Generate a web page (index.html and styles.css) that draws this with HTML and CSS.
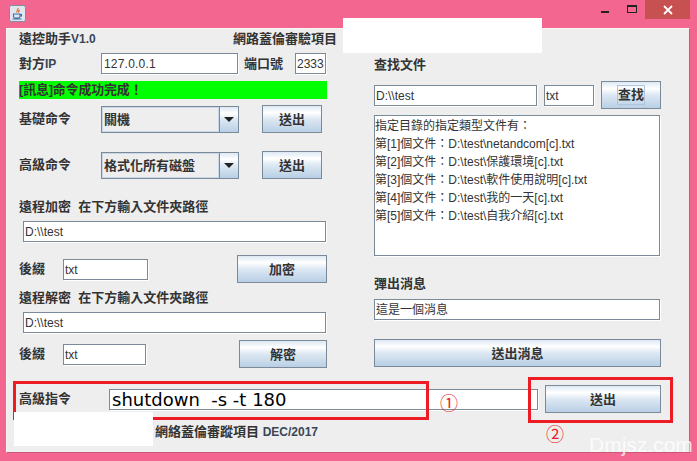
FILE: index.html
```html
<!DOCTYPE html>
<html lang="zh-Hant">
    <head>
        <meta charset="UTF-8" />
        <title>遠控助手</title>
        <link rel="stylesheet" href="styles.css">
    </head>
    <body>
        <div class="window">
            <div class="titlebar">
                <svg class="app-icon" width="17" height="17" viewBox="0 0 17 17">
                    <rect x="0.5" y="0.5" width="16" height="16" rx="2" fill="#dfe6ee" stroke="#7d8ea3" />
                    <path d="M9 3c1 1.500-2 2.500-1 4.500M10.500 5c-1 1-1.500 1.500-.5 2.500" fill="none" stroke="#e0682a" stroke-width="1.200" />
                    <path d="M4.500 9h6.500v2.500c0 1-1 1.500-2 1.500H6.500c-1 0-2-.5-2-1.500zM11 9.500h1.500v1.500H11M3.500 14h9" fill="none" stroke="#3f6ea8" stroke-width="1.100" />
                </svg>
                <div class="controls">
                    <span class="ctl-min"></span>
                    <span class="ctl-max"></span>
                    <span class="ctl-close">
                        <svg width="10" height="10" viewBox="0 0 10 10"><path d="M1 1l8 8M9 1l-8 8" stroke="#fff" stroke-width="1.800" /></svg>
                    </span>
                </div>
            </div>
            <div class="panel">
                <div class="columns">
                    <div class="col-left">
                        <div class="row title-row">
                            <span class="label">遠控助手<span class="latin">V1.0</span></span>
                            <span class="label project">網路蓋倫審驗項目</span>
                        </div>
                        <div class="row ip-row">
                            <span class="label w82">對方<span class="latin">IP</span></span>
                            <div class="field ip">127.0.0.1</div>
                            <span class="label port-label">端口號</span>
                            <div class="field port">2333</div>
                        </div>
                        <div class="status">[訊息]命令成功完成！</div>
                        <div class="row cmd-row">
                            <span class="label w82">基礎命令</span>
                            <div class="combo">
                                <div class="combo-value">關機</div>
                                <div class="combo-arrow"></div>
                            </div>
                            <button class="btn btn-send">送出</button>
                        </div>
                        <div class="row cmd-row second">
                            <span class="label w82">高級命令</span>
                            <div class="combo">
                                <div class="combo-value">格式化所有磁盤</div>
                                <div class="combo-arrow"></div>
                            </div>
                            <button class="btn btn-send">送出</button>
                        </div>
                        <div class="label section enc-title">遠程加密&nbsp;&nbsp;在下方輸入文件夾路徑</div>
                        <div class="field path enc-path">D:\\test</div>
                        <div class="row suffix-row enc-suffix">
                            <span class="label w44">後綴</span>
                            <div class="field suffix">txt</div>
                            <button class="btn btn-enc">加密</button>
                        </div>
                        <div class="label section dec-title">遠程解密&nbsp;&nbsp;在下方輸入文件夾路徑</div>
                        <div class="field path dec-path">D:\\test</div>
                        <div class="row suffix-row dec-suffix">
                            <span class="label w44">後綴</span>
                            <div class="field suffix short">txt</div>
                            <button class="btn btn-dec">解密</button>
                        </div>
                    </div>
                    <div class="col-right">
                        <div class="label section find-title">查找文件</div>
                        <div class="row find-row">
                            <div class="field find-path">D:\\test</div>
                            <div class="field find-type">txt</div>
                            <button class="btn btn-find"><span class="focus">查找</span></button>
                        </div>
                        <div class="field results">
                            <div>指定目錄的指定類型文件有：</div>
                            <div>第[1]個文件：D:\test\netandcom[c].txt</div>
                            <div>第[2]個文件：D:\test\保護環境[c].txt</div>
                            <div>第[3]個文件：D:\test\軟件使用說明[c].txt</div>
                            <div>第[4]個文件：D:\test\我的一天[c].txt</div>
                            <div>第[5]個文件：D:\test\自我介紹[c].txt</div>
                        </div>
                        <div class="label section popup-title">彈出消息</div>
                        <div class="field popup-msg">這是一個消息</div>
                        <button class="btn btn-popup">送出消息</button>
                    </div>
                </div>
                <div class="row bottom-row">
                    <span class="label w90">高級指令</span>
                    <div class="field command">shutdown&nbsp;&nbsp;-s -t 180</div>
                    <button class="btn btn-command">送出</button>
                </div>
                <div class="footer">網絡蓋倫審蹤項目 <span class="footer-date">DEC/2017</span></div>
            </div>

            <!-- annotations drawn over the screenshot -->
            <div class="mark mark-one"></div>
            <div class="mark mark-two"></div>
            <div class="patch patch-top"></div>
            <div class="patch patch-bottom"></div>
            <span class="circled circled-one">①</span>
            <span class="circled circled-two">②</span>
            <span class="watermark">Dmjsz.com</span>
        </div>
    </body>
</html>
```

FILE: styles.css
```css
* {
    box-sizing: border-box;
}
html, body {
    margin: 0;
    padding: 0;
}
body {
    width: 697px;
    height: 461px;
    overflow: hidden;
    font-family: "Liberation Sans", "Noto Sans CJK TC", sans-serif;
    color: #333;
}
.window {
    position: relative;
    width: 697px;
    height: 461px;
    background-color: #f26690;
    padding: 0 7px 8px 6px;
    display: flex;
    flex-direction: column;
}
.titlebar {
    position: relative;
    height: 28px;
    flex: none;
}
.app-icon {
    position: absolute;
    left: 3px;
    top: 5px;
}
.controls {
    position: absolute;
    right: 0;
    top: 0;
    display: flex;
    align-items: flex-start;
}
.ctl-min {
    width: 8px;
    height: 2px;
    margin-top: 11px;
    margin-right: 18px;
    background-color: #222;
}
.ctl-max {
    width: 10px;
    height: 8px;
    margin-top: 5px;
    margin-right: 8px;
    border: 1px solid #222;
    border-top-width: 2px;
}
.ctl-close {
    width: 45px;
    height: 19px;
    background-color: #c75050;
    display: flex;
    align-items: center;
    justify-content: center;
}
.panel {
    flex: 1;
    background-color: #eee;
    border: 1px solid #f7f7f7;
    border-right-color: #c8587a;
    border-bottom-color: #c8587a;
    padding: 0 0 0 12px;
}
.columns {
    display: flex;
    gap: 47px;
    height: 355px;
}
.col-left {
    width: 308px;
}
.col-right {
    width: 287px;
}
.row {
    display: flex;
    align-items: center;
}
.label {
    font-size: 13px;
    font-weight: 700;
    line-height: 18px;
    color: #333;
    white-space: nowrap;
}
.latin {
    font-size: 12px;
    color: #3a4656;
}
.w82 {
    width: 82px;
}
.w44 {
    width: 44px;
}
.w90 {
    width: 90px;
}
.field {
    height: 21px;
    background-color: #fff;
    border: 1px solid #7a8a99;
    box-shadow: 1px 1px 0 #fff;
    font-size: 12px;
    line-height: 20px;
    padding: 0 1px;
    color: #333;
    white-space: nowrap;
    overflow: hidden;
}
.btn {
    display: block;
    height: 28px;
    padding: 0 0 1px;
    border: 1px solid #7a8a99;
    background: linear-gradient(#dde8f3 0%, #fff 25%, #dde8f3 50%, #b8cfe5 100%);
    font-family: inherit;
    font-size: 13px;
    font-weight: 700;
    color: #333;
}

.title-row {
    height: 19px;
    justify-content: space-between;
    padding-top: 1px;
}
.project {
    margin-right: -10px;
}
.ip-row {
    margin-top: 5px;
}
.ip {
    width: 137px;
    padding: 0 2px;
    letter-spacing: 0.2px;
}
.port-label {
    margin-left: 6px;
    width: 51px;
}
.port {
    width: 31px;
}
.status {
    margin-top: 7px;
    height: 18px;
    background-color: #0f0;
    font-size: 13px;
    font-weight: 700;
    line-height: 18px;
    letter-spacing: -0.2px;
    color: #333;
}
.cmd-row {
    margin-top: 6px;
    height: 28px;
}
.cmd-row.second {
    margin-top: 18px;
}
.combo {
    display: flex;
    width: 138px;
    height: 27px;
    border: 1px solid #7a8a99;
    background-color: #dde8f3;
}
.combo-value {
    flex: 1;
    border: 1px solid #c8d8e8;
    background-color: #eee;
    font-size: 13px;
    font-weight: 700;
    line-height: 23px;
    padding-left: 1px;
    color: #333;
}
.combo-arrow {
    position: relative;
    width: 19px;
    border-left: 1px solid #7a8a99;
    background: linear-gradient(#dde8f3 0%, #fff 25%, #dde8f3 50%, #b8cfe5 100%);
}
.combo-arrow::after {
    content: "";
    position: absolute;
    left: 4px;
    top: 10px;
    border-left: 5px solid transparent;
    border-right: 5px solid transparent;
    border-top: 5px solid #222;
}
.btn-send {
    width: 60px;
    margin-left: 23px;
}
.section {
    height: 18px;
}
.enc-title {
    margin-top: 19px;
}
.path {
    width: 303px;
    margin-left: 4px;
}
.enc-path {
    margin-top: 5px;
}
.suffix-row {
    height: 28px;
}
.enc-suffix {
    margin-top: 13px;
}
.suffix {
    width: 85px;
}
.suffix.short {
    width: 83px;
}
.btn-enc {
    width: 90px;
    margin-left: 89px;
}
.btn-dec {
    width: 88px;
    margin-left: 93px;
}
.dec-title {
    margin-top: 6px;
}
.dec-path {
    margin-top: 5px;
}
.dec-suffix {
    margin-top: 7px;
}

.find-title {
    margin-top: 27px;
}
.find-row {
    margin-top: 7px;
    height: 28px;
}
.find-path {
    width: 163px;
}
.find-type {
    width: 50px;
    margin-left: 7px;
}
.btn-find {
    width: 60px;
    margin-left: 7px;
}
.focus {
    display: inline-block;
    border: 1px solid #b0c4de;
    line-height: 18px;
}
.results {
    margin-top: 6px;
    width: 286px;
    height: 141px;
    line-height: 18px;
    padding: 1px 0 0;
}
.popup-title {
    margin-top: 19px;
}
.popup-msg {
    margin-top: 6px;
    width: 286px;
}
.btn-popup {
    margin-top: 19px;
    width: 287px;
}

.bottom-row {
    margin-top: 1px;
    height: 28px;
}
.command {
    width: 429px;
    padding: 0 2px;
    font-family: "DejaVu Sans", sans-serif;
    font-size: 18px;
    line-height: 20px;
    color: #000;
}
.btn-command {
    width: 116px;
    margin-left: 7px;
}
.footer {
    margin: 10px 0 0 136px;
    font-size: 13px;
    font-weight: 700;
    line-height: 18px;
}
.footer-date {
    font-size: 12px;
    color: #3a4656;
}

.patch {
    position: absolute;
    background-color: #fff;
}
.patch-top {
    left: 343px;
    top: 18px;
    width: 199px;
    height: 35px;
}
.patch-bottom {
    left: 14px;
    top: 412px;
    width: 139px;
    height: 34px;
}
.mark {
    position: absolute;
    border: 3px solid #ed1c24;
}
.mark-one {
    left: 13px;
    top: 381px;
    width: 416px;
    height: 39px;
}
.mark-two {
    left: 528px;
    top: 377px;
    width: 145px;
    height: 46px;
}
.circled {
    position: absolute;
    font-family: "Noto Sans CJK TC", sans-serif;
    font-size: 18px;
    line-height: 20px;
    color: #ed1c24;
}
.circled-one {
    left: 440px;
    top: 392px;
}
.circled-two {
    left: 546px;
    top: 423px;
}
.watermark {
    position: absolute;
    left: 589px;
    top: 433px;
    font-family: "Liberation Sans", sans-serif;
    font-size: 21px;
    line-height: 24px;
    color: rgba(255, 255, 255, 0.8);
}
```
